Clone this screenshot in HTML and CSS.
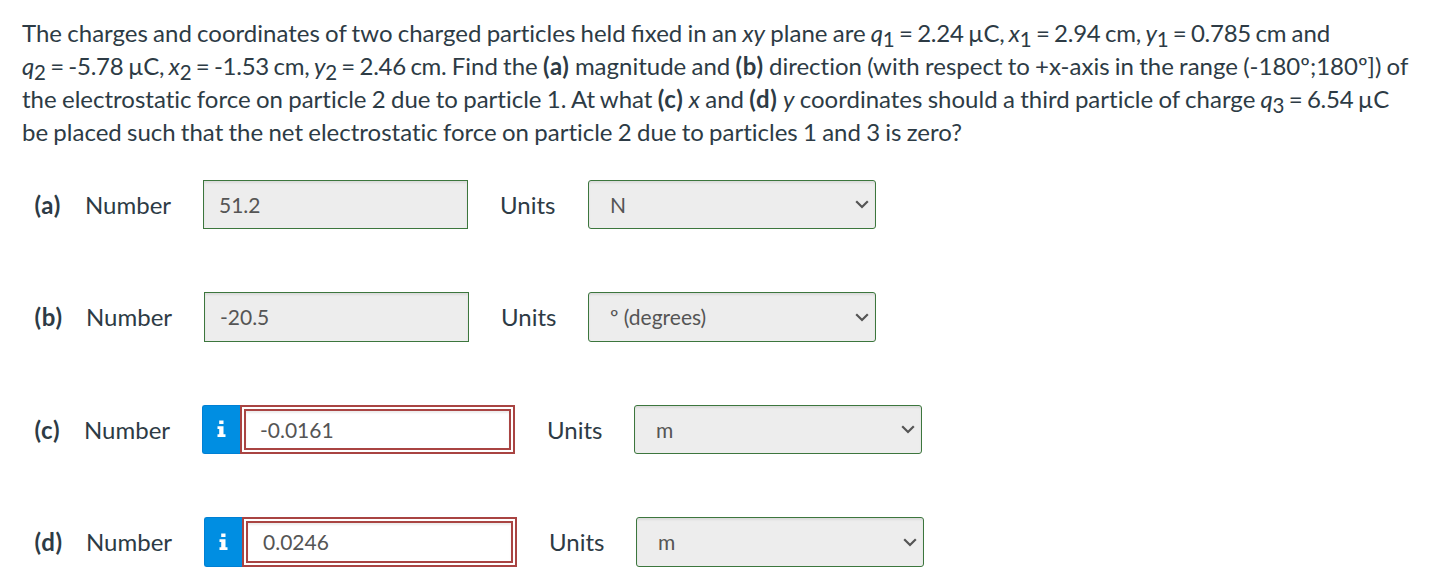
FILE: index.html
```html
<!DOCTYPE html>
<html lang="en">
<head>
    <meta charset="UTF-8">
    <meta name="viewport" content="width=device-width, initial-scale=1.0">
    <title>Electrostatic Force</title>
    <link rel="stylesheet" href="styles.css">
</head>
<body>
    <p class="question">
        The charges and coordinates of two charged particles held <span class="lig">fi</span>xed in an <i>xy</i> plane are <span class="eq"><i>q</i><sub>1</sub> = 2.24 µC, <i>x</i><sub>1</sub> = 2.94 cm, <i>y</i><sub>1</sub> = 0.785 cm</span> and<br>
        <span class="eq"><i>q</i><sub>2</sub> = -5.78 µC, <i>x</i><sub>2</sub> = -1.53 cm, <i>y</i><sub>2</sub> = 2.46 cm.</span> Find the <b>(a)</b> magnitude and <b>(b)</b> direction (with respect to +x-axis in the range (-180º;180º]) of<br>
        <span class="wide">the electrostatic force on particle 2 due to particle 1. At what <b>(c)</b> <i>x</i> and <b>(d)</b> <i>y</i> coordinates should a third particle of charge</span> <span class="eq"><i>q</i><sub>3</sub> = 6.54 µC</span><br>
        be placed such that the net electrostatic force on particle 2 due to particles 1 and 3 is zero?
    </p>

    <div class="answers">
        <!-- (a) -->
        <div class="row">
            <b class="part">(a)</b>
            <label class="number-label" for="numA">Number</label>
            <input type="text" class="number" id="numA" value="51.2" disabled>
            <label class="units-label" for="unitA">Units</label>
            <div class="units">
                <select id="unitA" disabled><option>N</option></select>
                <svg class="arrow" viewBox="0 0 14 9"><path d="M1.2 1.2 L7 7 L12.8 1.2"/></svg>
            </div>
        </div>

        <!-- (b) -->
        <div class="row row-b">
            <b class="part">(b)</b>
            <label class="number-label" for="numB">Number</label>
            <input type="text" class="number" id="numB" value="-20.5" disabled>
            <label class="units-label" for="unitB">Units</label>
            <div class="units">
                <select id="unitB" disabled><option>º (degrees)</option></select>
                <svg class="arrow" viewBox="0 0 14 9"><path d="M1.2 1.2 L7 7 L12.8 1.2"/></svg>
            </div>
        </div>

        <!-- (c) -->
        <div class="row row-c">
            <b class="part">(c)</b>
            <label class="number-label" for="numC">Number</label>
            <span class="info">
                <svg class="info-icon" viewBox="0 0 9 17"><path d="M2.2 0.5h4.3v3.6H2.2z M0.5 6.2h6v8h2v2.8H0.5v-2.8h1.7V9H0.5z"/></svg>
            </span>
            <input type="text" class="number wrong" id="numC" value="-0.0161">
            <label class="units-label" for="unitC">Units</label>
            <div class="units">
                <select id="unitC" disabled><option>m</option></select>
                <svg class="arrow" viewBox="0 0 14 9"><path d="M1.2 1.2 L7 7 L12.8 1.2"/></svg>
            </div>
        </div>

        <!-- (d) -->
        <div class="row row-d">
            <b class="part">(d)</b>
            <label class="number-label" for="numD">Number</label>
            <span class="info">
                <svg class="info-icon" viewBox="0 0 9 17"><path d="M2.2 0.5h4.3v3.6H2.2z M0.5 6.2h6v8h2v2.8H0.5v-2.8h1.7V9H0.5z"/></svg>
            </span>
            <input type="text" class="number wrong" id="numD" value="0.0246">
            <label class="units-label" for="unitD">Units</label>
            <div class="units">
                <select id="unitD" disabled><option>m</option></select>
                <svg class="arrow" viewBox="0 0 14 9"><path d="M1.2 1.2 L7 7 L12.8 1.2"/></svg>
            </div>
        </div>
    </div>
</body>
</html>
```
FILE: styles.css
```css
* {
    box-sizing: border-box;
}
body {
    margin: 0;
    padding: 16px 0 0 22px;
    font-family: Lato, sans-serif;
    font-size: 24px;
    line-height: 33px;
    color: #2d3b45;
    background: #fff;
    overflow: hidden;
    font-variant-ligatures: none;
}
.question {
    margin: 0;
    white-space: nowrap;
    word-spacing: -0.9px;
}
.lig {
    font-variant-ligatures: normal;
}
.wide {
    word-spacing: -0.84px;
}
.eq {
    word-spacing: -1.4px;
    letter-spacing: -0.25px;
}
b {
    letter-spacing: 0.7px;
}
sub {
    font-size: 20.5px;
    line-height: 0;
    position: relative;
    bottom: -5px;
    vertical-align: baseline;
}
.answers {
    display: flex;
    flex-direction: column;
    gap: 63px;
    margin-top: 32px;
    padding-left: 12px;
}
.row {
    display: flex;
    align-items: center;
    height: 49px;
}
.row-b, .row-d {
    height: 50px;
}
.part {
    width: 51px;
    padding-left: 0.5px;
}
.number-label {
    width: 118px;
}
.row-b .part, .row-d .part {
    width: 52px;
}
.row-b label, .row-d label, .row-b .part, .row-d .part {
    padding-bottom: 1px;
}
.row-c .part {
    width: 50px;
}
.number {
    width: 265px;
    height: 100%;
    margin: 0;
    padding: 0 15px;
    border: 1px solid #3c763d;
    border-radius: 0;
    background: #ededed;
    box-shadow: inset 0 2px 2px rgba(0, 0, 0, 0.075);
    font-family: inherit;
    font-size: 21px;
    color: #555;
}
.number.wrong {
    width: 275px;
    padding: 0 14px;
    border: 6px double #a94442;
    background: #fff;
}
.row-b .number, .row-d .number {
    padding-bottom: 1px;
}
.units-label {
    width: 88px;
    margin-left: 32px;
}
.row-b .units-label, .row-c .units-label, .row-d .units-label {
    width: 87px;
}
.row-d .number.wrong {
    padding-left: 15px;
}
.info {
    display: flex;
    justify-content: center;
    align-items: center;
    width: 38px;
    height: 100%;
    border: 1px solid #0080d4;
    border-right: none;
    border-radius: 3px 0 0 3px;
    background: #008ee2;
}
.info-icon {
    width: 9px;
    height: 17px;
    margin-bottom: 2px;
    fill: #fff;
}
.units {
    position: relative;
    width: 288px;
    height: 100%;
}
.units select {
    appearance: none;
    width: 100%;
    height: 100%;
    margin: 0;
    padding: 0 21px;
    border: 1px solid #3c763d;
    border-radius: 3px;
    background: #ededed;
    box-shadow: inset 0 2px 2px rgba(0, 0, 0, 0.075);
    font-family: inherit;
    font-size: 21px;
    color: #555;
    opacity: 1;
}
.row-b .units select, .row-d .units select {
    padding-bottom: 1px;
}
/* chevron sits on top of the select */
.arrow {
    position: absolute;
    right: 7px;
    top: 20px;
    width: 14px;
    height: 9px;
    fill: none;
    stroke: #555;
    stroke-width: 2.2;
    pointer-events: none;
}
.row-b .arrow, .row-d .arrow {
    top: 21px;
}
```
